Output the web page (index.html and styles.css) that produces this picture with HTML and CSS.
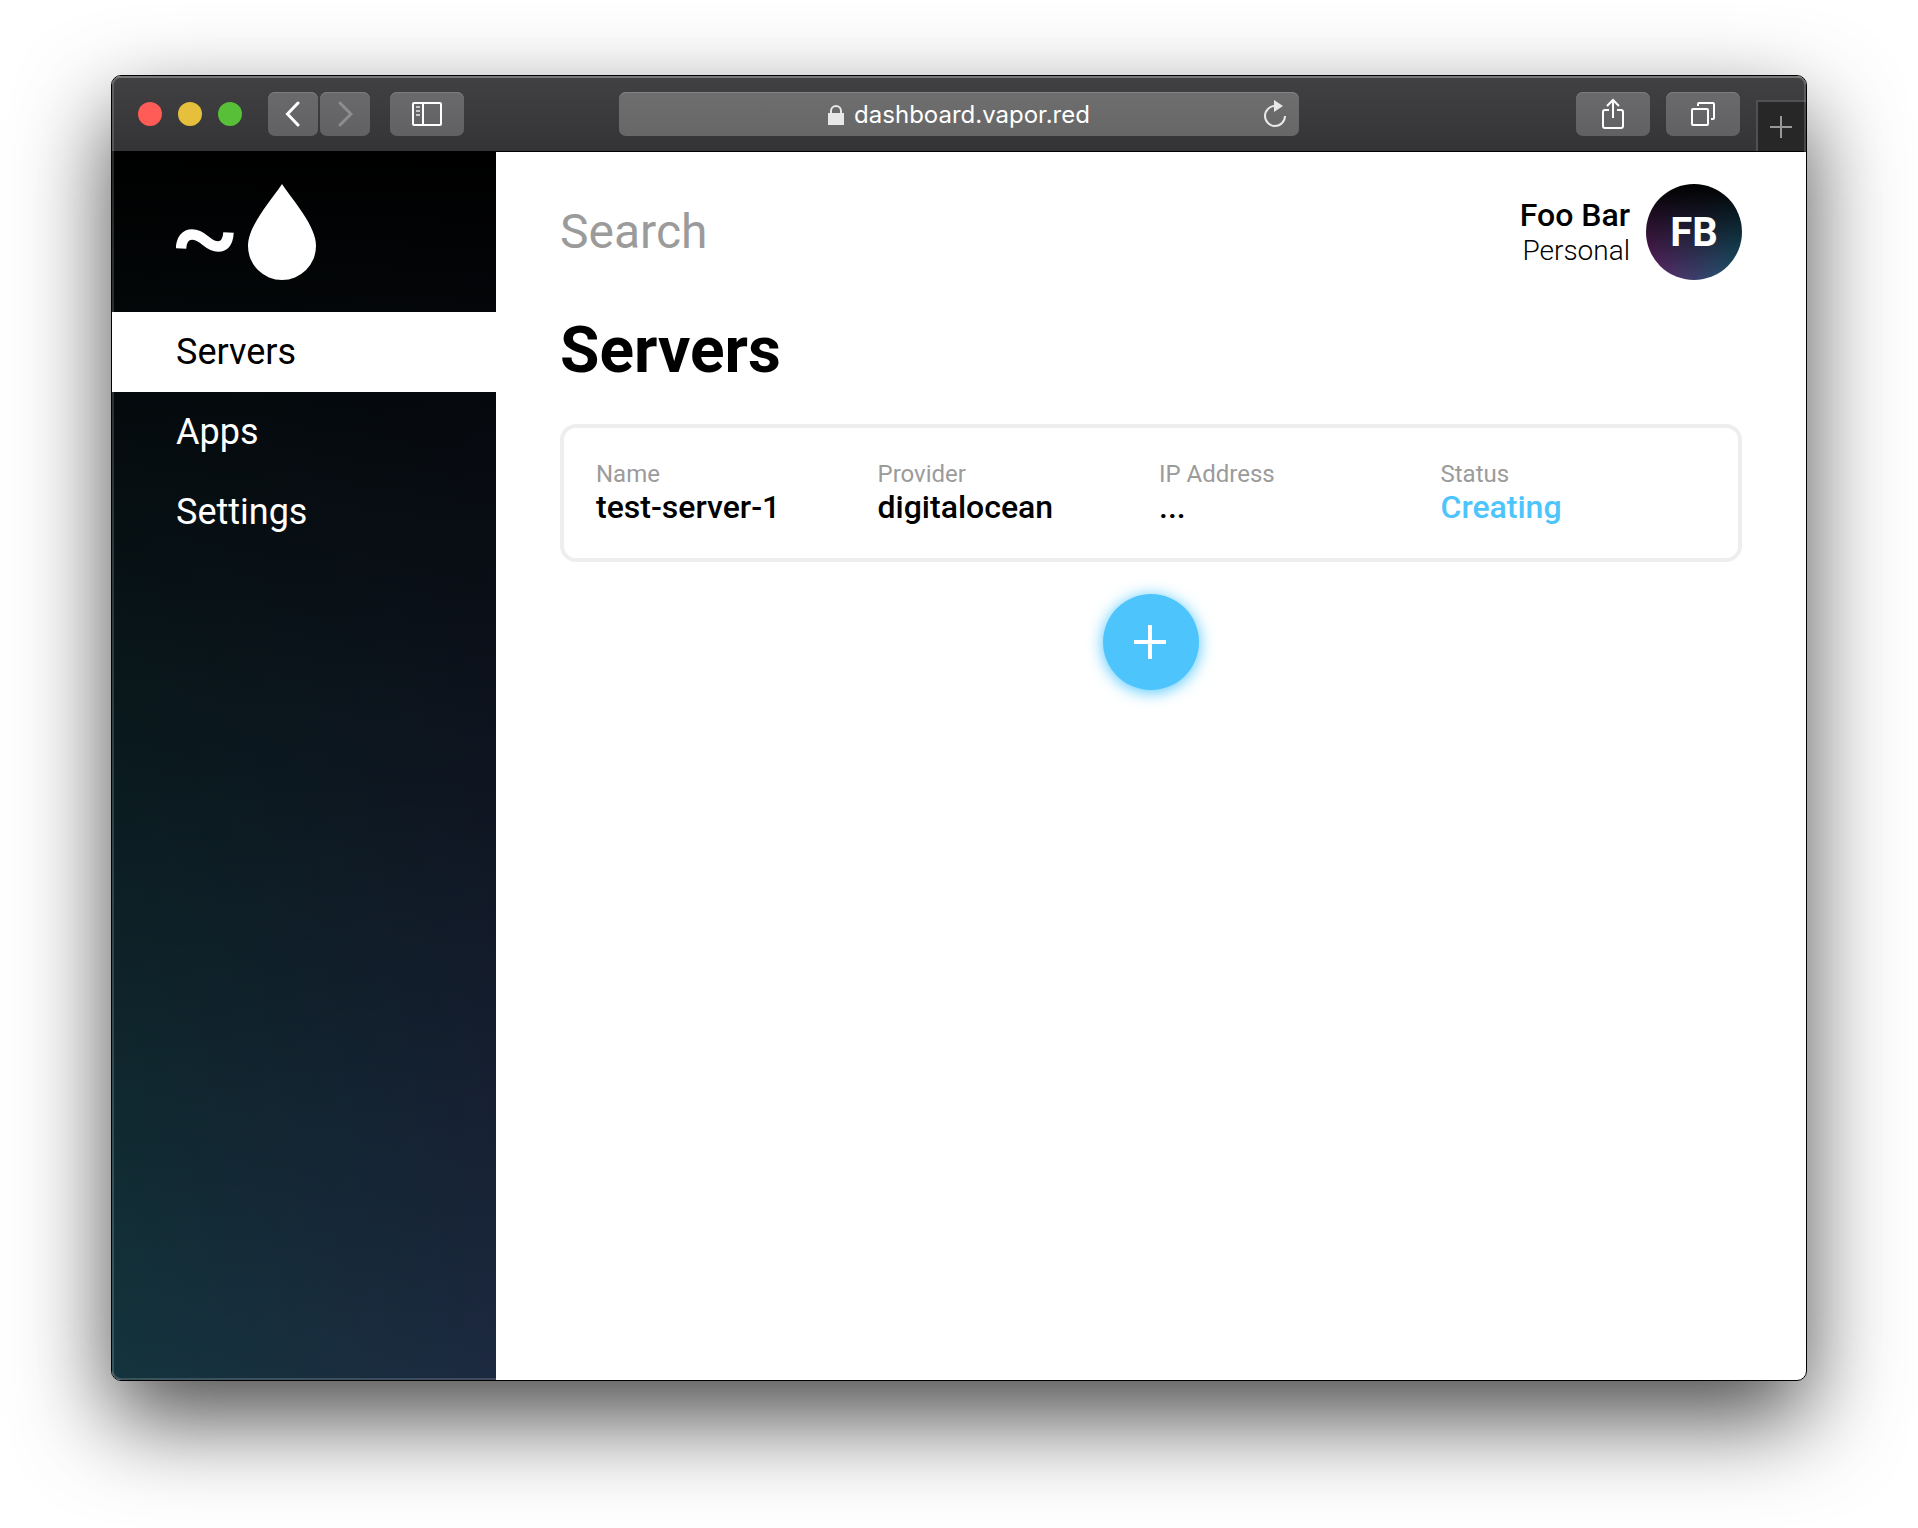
FILE: index.html
```html
<!DOCTYPE html>
<html lang="en">
<head>
<meta charset="utf-8">
<meta name="viewport" content="width=device-width, initial-scale=1">
<title>Servers</title>
<link rel="stylesheet" href="styles.css">
</head>
<body>
<div class="window">
  <header class="toolbar">
    <div class="toolbar-start">
      <div class="lights">
        <button class="light light-close" aria-label="Close"></button>
        <button class="light light-minimize" aria-label="Minimize"></button>
        <button class="light light-zoom" aria-label="Zoom"></button>
      </div>
      <div class="history">
        <button class="tool tool-narrow" aria-label="Back">
          <svg width="16" height="26" viewBox="0 0 16 26"><path d="M13 2 2.500 13 13 24" fill="none" stroke="#fff" stroke-width="3" stroke-linecap="round"/></svg>
        </button>
        <button class="tool tool-narrow" aria-label="Forward">
          <svg width="16" height="26" viewBox="0 0 16 26"><path d="M3 2l11 11L3 24" fill="none" stroke="#8d8d90" stroke-width="3" stroke-linecap="round"/></svg>
        </button>
      </div>
      <button class="tool" aria-label="Show sidebar">
        <svg width="30" height="24" viewBox="0 0 30 24"><rect x="1" y="1" width="28" height="22" rx="1" fill="none" stroke="#fff" stroke-width="2"/><path d="M11 1v22" stroke="#fff" stroke-width="2"/><path d="M4 5h4M4 9h4M4 13h4" stroke="#c6c6c8" stroke-width="2"/></svg>
      </button>
    </div>
    <div class="address">
      <a class="address-link" href="#">
        <svg width="16" height="20" viewBox="0 0 16 20"><path d="M0 8h16v12H0z" fill="#e8e8e8"/><path d="M3 9V6a5 5 0 0 1 10 0v3" fill="none" stroke="#e8e8e8" stroke-width="2"/></svg>
        dashboard.vapor.red
      </a>
      <button class="reload" aria-label="Reload">
        <svg width="24" height="28" viewBox="0 0 24 28"><path d="M12 6A10 10 0 1 0 22 16" fill="none" stroke="#e8e8e8" stroke-width="2"/><path d="M11 0l9 6-9 6z" fill="#e8e8e8"/></svg>
      </button>
    </div>
    <div class="toolbar-end">
      <button class="tool" aria-label="Share">
        <svg width="24" height="32" viewBox="0 0 24 32"><path d="M8 12H4a2 2 0 0 0-2 2v14a2 2 0 0 0 2 2h16a2 2 0 0 0 2-2V14a2 2 0 0 0-2-2h-4M12 20V3M6 8l6-6 6 6" fill="none" stroke="#fff" stroke-width="2"/></svg>
      </button>
      <button class="tool" aria-label="Show all tabs">
        <svg width="24" height="24" viewBox="0 0 24 24"><rect x="1" y="7" width="16" height="16" rx="1" fill="none" stroke="#fff" stroke-width="2"/><path d="M7 4V2a1 1 0 0 1 1-1h14a1 1 0 0 1 1 1v14a1 1 0 0 1-1 1h-2" fill="none" stroke="#fff" stroke-width="2"/></svg>
      </button>
      <button class="new-tab" aria-label="New tab">
        <svg width="22" height="22" viewBox="0 0 22 22"><path d="M11 0v22M0 11h22" stroke="#98989a" stroke-width="2"/></svg>
      </button>
    </div>
  </header>
  <div class="page">
    <aside class="sidebar">
      <a class="logo" href="#" aria-label="Home">
        <svg width="140" height="96" viewBox="0 0 140 96"><path d="M5 64.500C5.500 55 10 50.500 16 50.500C28 50.500 31 62.500 42 62.500C49 62.500 52 57 52.500 48.500" fill="none" stroke="#fff" stroke-width="10.500"/><path d="M106 0C118 18 140 42 140 62a34 34 0 0 1-68 0C72 42 94 18 106 0z" fill="#fff"/></svg>
      </a>
      <nav class="nav">
        <a class="nav-item nav-item-active" href="#" aria-current="page">Servers</a>
        <a class="nav-item" href="#">Apps</a>
        <a class="nav-item" href="#">Settings</a>
      </nav>
    </aside>
    <main class="main">
      <div class="topbar">
        <input class="search" type="search" placeholder="Search" aria-label="Search">
        <div class="account">
          <div class="account-text">
            <div class="account-name">Foo Bar</div>
            <div class="account-team">Personal</div>
          </div>
          <div class="avatar">FB</div>
        </div>
      </div>
      <h1 class="title">Servers</h1>
      <dl class="card">
        <div class="field"><dt>Name</dt><dd>test-server-1</dd></div>
        <div class="field"><dt>Provider</dt><dd>digitalocean</dd></div>
        <div class="field"><dt>IP Address</dt><dd>...</dd></div>
        <div class="field"><dt>Status</dt><dd class="status">Creating</dd></div>
      </dl>
      <button class="add" aria-label="Add server">
        <svg width="34" height="34" viewBox="0 0 34 34"><path d="M16 0v34M0 17h32" stroke="#fff" stroke-width="4"/></svg>
      </button>
    </main>
  </div>
</div>
</body>
</html>
```
FILE: styles.css
```css
* { box-sizing: border-box; }

body {
  margin: 0;
  min-height: 100vh;
  padding: 75px 111px 147px;
  display: flex;
  background: #fff;
  color: #000;
  font-family: Roboto, sans-serif;
}

button {
  margin: 0;
  padding: 0;
  border: 0;
  background: none;
  font: inherit;
}

a { color: inherit; text-decoration: none; }
svg { display: block; flex: none; }

.window {
  position: relative;
  flex: 1;
  min-width: 0;
  display: flex;
  flex-direction: column;
  border: 1px solid #000;
  border-radius: 10px;
  overflow: hidden;
  background: #fff;
  box-shadow: 0 38px 92px rgba(0, 0, 0, 0.7);
}

/* light rim just inside the window frame */
.window::after {
  content: "";
  position: absolute;
  inset: 0;
  border-radius: 9px;
  box-shadow: inset 0 0 0 2px rgba(255, 255, 255, 0.16);
  pointer-events: none;
}

/* browser toolbar */
.toolbar {
  display: grid;
  grid-template-columns: 1fr minmax(0, 680px) 1fr;
  height: 76px;
  padding-top: 16px;
  border-bottom: 1px solid #000;
  background: linear-gradient(#414143, #343436);
  box-shadow: inset 0 2px rgba(255, 255, 255, 0.16);
}

.toolbar-start {
  display: flex;
  align-items: flex-start;
  gap: 20px;
  padding-left: 26px;
}

.lights {
  display: flex;
  align-items: center;
  gap: 16px;
  height: 44px;
  margin-right: 6px;
}

.light { width: 24px; height: 24px; border-radius: 50%; }
.light-close { background: #ff5b57; }
.light-minimize { background: #e6bf3c; }
.light-zoom { background: #58c038; }

.history { display: flex; gap: 2px; }

.tool {
  display: flex;
  align-items: center;
  justify-content: center;
  width: 74px;
  height: 44px;
  border-radius: 7px;
  background: linear-gradient(#6a6a6c, #616163);
  box-shadow: inset 0 1px #7d7d7f;
}

.tool-narrow { width: 50px; }

.address {
  display: grid;
  grid-template-columns: 48px 1fr 48px;
  align-items: center;
  height: 44px;
  border-radius: 7px;
  background: linear-gradient(#6e6e6e, #676768);
  box-shadow: inset 0 1px #838384;
}

.address-link {
  grid-column: 2;
  display: flex;
  align-items: center;
  justify-content: center;
  gap: 10px;
  padding-top: 2px;
  color: #fff;
  font: 400 24px/32px Inter, sans-serif;
}

.reload { display: flex; justify-content: center; }

.toolbar-end {
  display: flex;
  justify-content: flex-end;
  align-items: flex-start;
  gap: 16px;
}

.new-tab {
  display: flex;
  align-items: center;
  justify-content: center;
  align-self: flex-end;
  width: 50px;
  height: 51px;
  padding-right: 2px;
  border: solid #505052;
  border-width: 2px 0 0 2px;
  background: #272728;
}

/* dashboard */
.page { flex: 1; display: flex; }

.sidebar {
  flex: none;
  width: 384px;
  background: linear-gradient(#000, rgba(0, 0, 0, 0)), linear-gradient(to right, #14343d, #1c2940);
  color: #fff;
}

.logo { display: block; padding: 32px 64px; }

.nav-item {
  display: block;
  padding: 0 64px;
  font-size: 36px;
  line-height: 80px;
}

.nav-item-active { background: #fff; color: #000; }

.main {
  flex: 1;
  min-width: 0;
  display: flex;
  flex-direction: column;
  padding: 0 64px 64px;
}

.topbar {
  display: flex;
  align-items: center;
  gap: 32px;
  padding: 32px 0;
}

.search {
  flex: 1;
  min-width: 0;
  padding: 0;
  border: 0;
  background: none;
  font: 400 48px/56px Roboto, sans-serif;
}

.search::placeholder { color: #9b9b9b; }

.account { display: flex; align-items: center; gap: 16px; }
.account-text { text-align: right; }
.account-name { font-size: 32px; font-weight: 500; line-height: 38px; }
.account-team { font-size: 28px; font-weight: 300; line-height: 34px; }

.avatar {
  display: flex;
  align-items: center;
  justify-content: center;
  width: 96px;
  height: 96px;
  border-radius: 50%;
  background: linear-gradient(#000, rgba(0, 0, 0, 0)), linear-gradient(to right, #622468, #1a5a70);
  color: #fff;
  font-size: 40px;
  font-weight: 700;
}

.title {
  margin: 0 0 34px;
  font-size: 64px;
  font-weight: 700;
  line-height: 78px;
}

.card {
  display: grid;
  grid-template-columns: repeat(4, 1fr);
  gap: 16px;
  margin: 0 0 32px;
  padding: 32px;
  border: 4px solid #eee;
  border-radius: 16px;
}

.field dt { color: #9b9b9b; font-size: 24px; line-height: 28px; }
.field dd { margin: 0; font-size: 32px; font-weight: 500; line-height: 38px; }
.field .status { color: #4dc5fc; }

.add {
  display: flex;
  align-items: center;
  justify-content: center;
  align-self: center;
  width: 96px;
  height: 96px;
  border-radius: 50%;
  background: #4dc5fc;
  box-shadow: 0 2px 16px #4dc5fc;
}
```
